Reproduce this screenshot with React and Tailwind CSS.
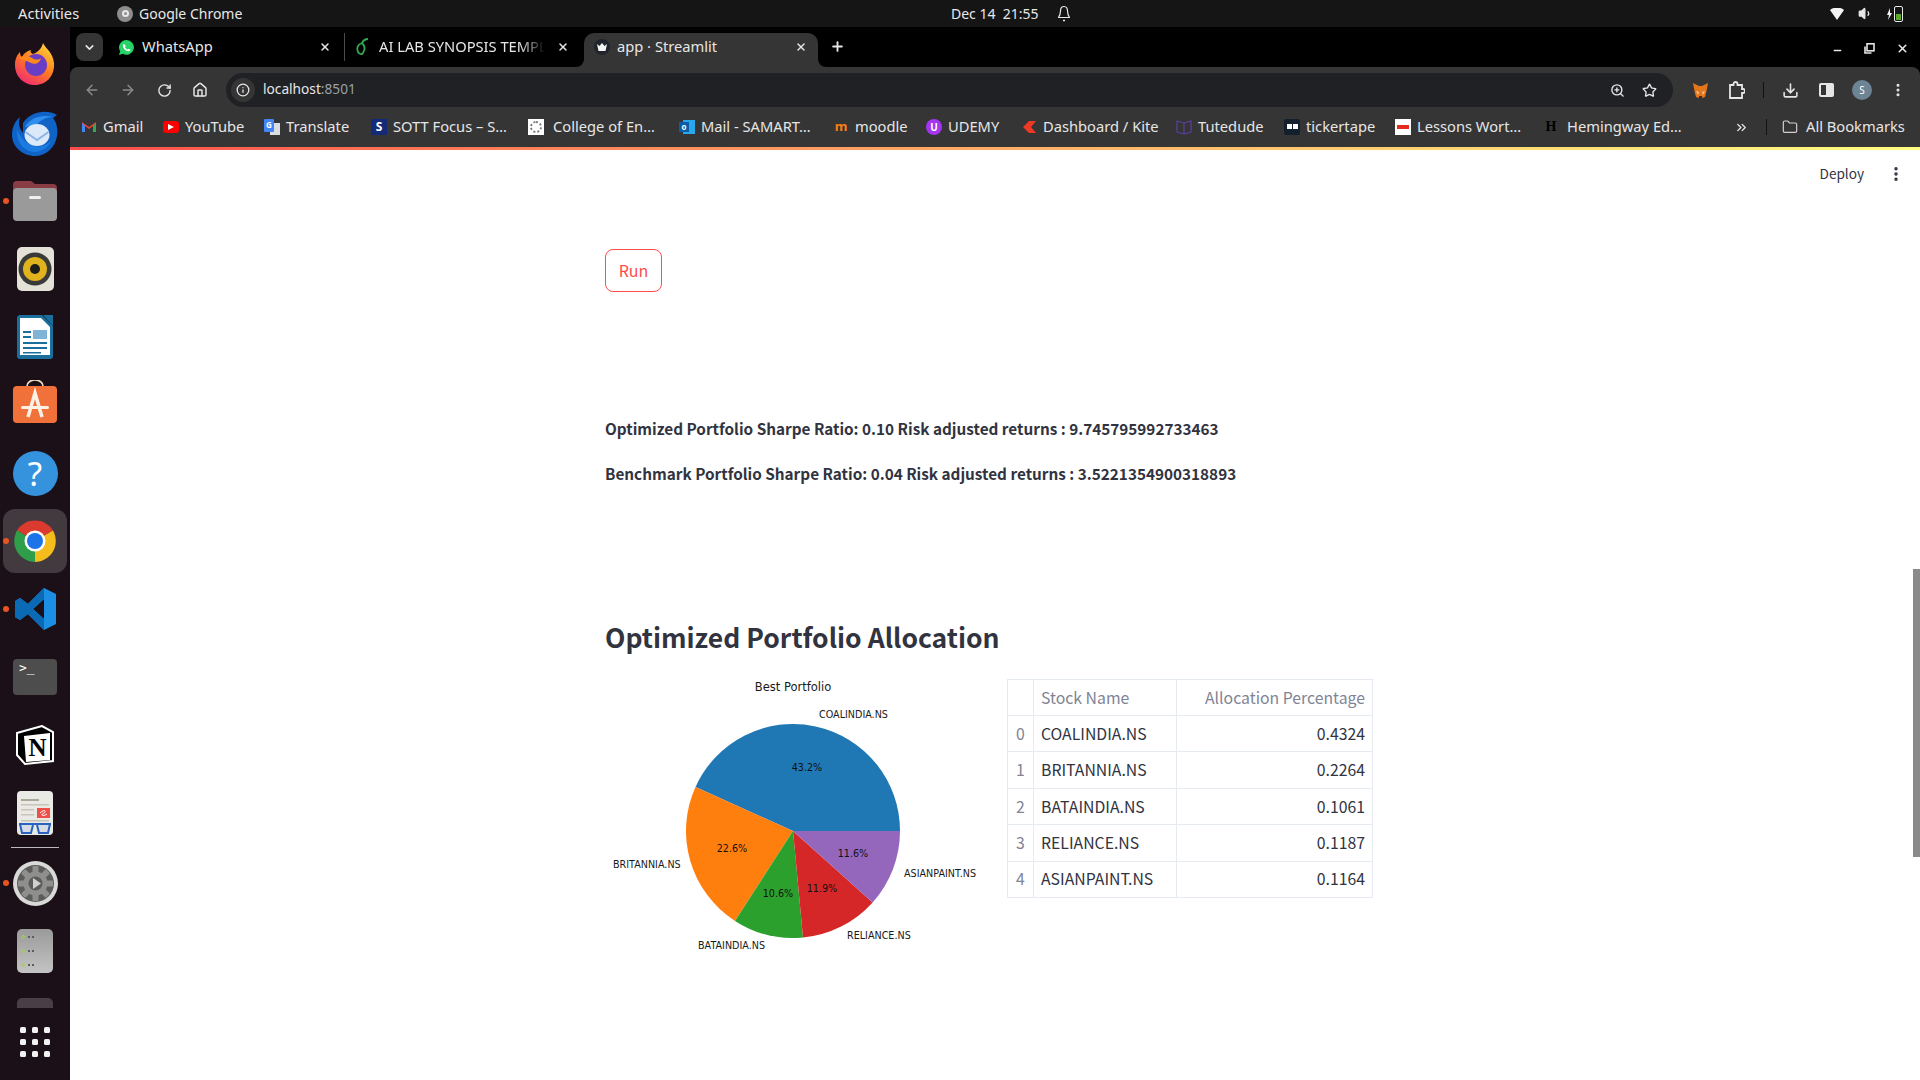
import {
  ArrowLeft,
  ArrowRight,
  RotateCw,
  Home,
  Info,
  ZoomIn,
  Star,
  Download,
  MoreVertical,
  ChevronDown,
  ChevronsRight,
  X,
  Plus,
  Minus,
  Folder,
  Volume1,
} from "lucide-react";

const UI_FONT = "font-['Noto_Sans',sans-serif]";
const ST_FONT = "font-['Noto_Sans_CJK_SC','Noto_Sans',sans-serif]";

// ---------- dock icons ----------
function FirefoxIcon() {
  return (
    <svg width="44" height="44" viewBox="0 0 44 44" className="-translate-y-[1px]">
      <defs>
        <linearGradient id="ffA" x1="0.8" y1="0" x2="0.2" y2="1">
          <stop offset="0" stopColor="#ffd53a" />
          <stop offset="0.5" stopColor="#ff7a1f" />
          <stop offset="1" stopColor="#f0257a" />
        </linearGradient>
      </defs>
      <path d="M30 1c2 5 10 9 11 20 1 13-8 22-19 22S2 35 2 23c0-6 2-10 5-13 0 3 1 4 2 5 2-4 5-6 9-7-1 2 0 3 2 4 5-2 9-6 10-11z" fill="url(#ffA)" />
      <circle cx="23" cy="23" r="11" fill="#6a3ec4" />
      <path d="M6 16c5-3 10-2 13 0 3 2 7 2 9 0-1 5-6 7-10 5-4-2-8-4-12-5z" fill="#ff8a1c" />
    </svg>
  );
}

function ThunderbirdIcon() {
  return (
    <svg width="48" height="48" viewBox="0 0 48 48">
      <path d="M12 14C20 2 36 0 46 6l-4 3c4 5 5 12 4 18-2 12-11 20-22 20C12 47 1 38 1 26 1 20 3 13 9 8c-2 6-1 11 3 16z" fill="#0f62c6" />
      <path d="M14 18c5-9 16-13 28-10-8 0-14 4-17 9z" fill="#2f8fee" />
      <path d="M6 20c-1 9 3 18 12 22 10 3 19-2 22-10-6 6-15 7-22 3-6-3-10-9-12-15z" fill="#1b7be0" />
      <ellipse cx="26" cy="26" rx="12.500" ry="11" fill="#dce9f8" />
      <path d="M14.500 23l11.500 8 11.500-8" fill="none" stroke="#8ab4e8" strokeWidth="2" />
    </svg>
  );
}

function FilesIcon() {
  return (
    <svg width="46" height="42" viewBox="0 0 46 42">
      <path d="M1 5a4 4 0 0 1 4-4h14l4 3h18a4 4 0 0 1 4 4v10H1z" fill="#8a3c44" />
      <rect x="1" y="8" width="44" height="33" rx="4" fill="#9a9a9a" />
      <rect x="17" y="16" width="12" height="3" rx="1.5" fill="#efefef" />
    </svg>
  );
}

function RhythmboxIcon() {
  return (
    <div className="w-[37px] h-[44px] rounded-[5px] bg-[#e4e1d6] flex items-center justify-center">
      <svg width="34" height="34" viewBox="0 0 34 34">
        <circle cx="17" cy="17" r="16.5" fill="#3a3a38" />
        <circle cx="17" cy="17" r="12" fill="#e0b21e" />
        <circle cx="17" cy="17" r="5" fill="#1c1c1a" />
      </svg>
    </div>
  );
}

function WriterIcon() {
  return (
    <svg width="38" height="46" viewBox="0 0 38 46">
      <path d="M3 1h23l11 11v30a3 3 0 0 1-3 3H4a3 3 0 0 1-3-3V3z" fill="#1b6f9c" />
      <path d="M4 4h21l9 9v28H4z" fill="#fff" />
      <path d="M27 1l10 11V1z" fill="#1b6f9c" />
      <rect x="7" y="17" width="8" height="2" fill="#1b6f9c" />
      <rect x="7" y="22" width="8" height="2" fill="#1b6f9c" />
      <rect x="17" y="16" width="14" height="9" fill="#7fb4d6" />
      <rect x="7" y="28" width="24" height="2" fill="#1b6f9c" />
      <rect x="7" y="33" width="24" height="2" fill="#1b6f9c" />
      <rect x="7" y="38" width="18" height="1.5" fill="#1b6f9c" />
    </svg>
  );
}

function StoreIcon() {
  return (
    <svg width="46" height="44" viewBox="0 0 46 44" className="-translate-y-[3px]">
      <path d="M15 10V6a8 6 0 0 1 16 0v4" fill="none" stroke="#f1d9bf" strokeWidth="1.6" />
      <rect x="1" y="6" width="44" height="37" rx="4" fill="#f0713a" />
      <path d="M16 37l7-24 7 24" fill="none" stroke="#fff1e6" strokeWidth="3.5" />
      <rect x="9" y="26" width="28" height="3" rx="1.5" fill="#fff1e6" />
    </svg>
  );
}

function HelpIcon() {
  return (
    <div className="w-[45px] h-[45px] rounded-full bg-[#3593dd] flex items-center justify-center text-white text-[33px] font-['Noto_Sans',sans-serif] leading-none">
      ?
    </div>
  );
}

function ChromeIcon({ size = 48 }) {
  return (
    <svg width={size} height={size} viewBox="0 0 48 48">
      <path d="M24 24L6 13.6A21 21 0 0 1 42 13.6z" fill="#db3a2e" />
      <path d="M24 24L42 13.6A21 21 0 0 1 24 45z" fill="#f4bd1c" />
      <path d="M24 24L24 45A21 21 0 0 1 6 13.6z" fill="#2e9e4a" />
      <circle cx="24" cy="24" r="10.5" fill="#fff" />
      <circle cx="24" cy="24" r="8" fill="#1d73e8" />
    </svg>
  );
}

function VscodeIcon() {
  return (
    <svg width="44" height="44" viewBox="0 0 44 44">
      <path d="M31 1L43 7v30l-12 6-16-16-8 6-5-3V14l5-3 8 6zM31 12L20 22l11 10z" fill="#1a8fe3" fillRule="evenodd" />
      <path d="M31 1L15 17 7 11 2 14v16l5 3 8-6 16 16V32L20 22 31 12z" fill="#0a6ab5" fillRule="evenodd" />
    </svg>
  );
}

function TerminalIcon() {
  return (
    <div className="w-[44px] h-[36px] rounded-[4px] bg-[#4d4d4d] pl-[6px] pt-[1px] text-white text-[13px] leading-[16px] font-['DejaVu_Sans_Mono',monospace]">
      &gt;_
    </div>
  );
}

function NotionIcon() {
  return (
    <div className="relative w-[38px] h-[40px] flex items-center justify-center">
      <svg className="absolute inset-0" width="38" height="40" viewBox="0 0 38 40">
        <path d="M1 8L26 1l11 6v29L9 39l-8-9z" fill="#000" stroke="#fff" strokeWidth="2" />
        <path d="M8 11L34 8v27L10 37z" fill="#fff" />
      </svg>
      <span className="relative ml-[5px] mt-[5px] text-black text-[25px] font-bold leading-none font-['Liberation_Serif',serif]">N</span>
    </div>
  );
}

function ReaderIcon() {
  return (
    <svg width="36" height="44" viewBox="0 0 36 44">
      <rect width="36" height="44" rx="4" fill="#e9e9e6" />
      <rect x="4" y="8" width="18" height="2" fill="#aca796" />
      <rect x="4" y="13" width="28" height="1.5" fill="#c8c4b8" />
      <rect x="4" y="18" width="13" height="1.5" fill="#c8c4b8" />
      <rect x="4" y="23" width="13" height="1.5" fill="#c8c4b8" />
      <rect x="20" y="17" width="13" height="10" fill="#ef4f48" />
      <path d="M23 22c3-3 6-3 5-1s-4 2-3 3 4 0 5-1" fill="none" stroke="#fff" strokeWidth="1" />
      <rect x="4" y="29" width="28" height="1.5" fill="#c8c4b8" />
      <path d="M2 33h32M3 33l2 9h9l2-8M20 34l2 8h9l2-9" fill="#d7dde6" stroke="#2a62c0" strokeWidth="2" />
    </svg>
  );
}

function SettingsIcon() {
  const teeth = [0, 45, 90, 135, 180, 225, 270, 315];
  return (
    <svg width="45" height="45" viewBox="0 0 45 45">
      <circle cx="22.5" cy="22.5" r="22.5" fill="#d9d9d7" />
      <circle cx="22.5" cy="22.5" r="18.5" fill="#5c5c5c" />
      {teeth.map((a) => (
        <rect key={a} x="19.5" y="5" width="6" height="8" rx="1" fill="#8f8f8d" transform={`rotate(${a} 22.5 22.5)`} />
      ))}
      <circle cx="22.5" cy="22.5" r="12" fill="#8f8f8d" />
      <circle cx="22.5" cy="22.5" r="7" fill="#5c5c5c" />
      <path d="M20 17l8 5.5-8 5.5z" fill="#d0d0ce" />
    </svg>
  );
}

function DrivesIcon() {
  return (
    <div className="w-[36px] h-[44px] rounded-[5px] bg-gradient-to-b from-[#9a9a9a] to-[#c4c4c4] flex flex-col justify-between px-[4px] py-[6px]">
      {[0, 1, 2].map((i) => (
        <div key={i} className="flex items-center gap-[2px]">
          <span className="w-[4px] h-[4px] rounded-full border border-[#a5cf5a]" />
          <span className="w-[2px] h-[2px] bg-[#5c5c5c] ml-[1px]" />
          <span className="w-[2px] h-[2px] bg-[#5c5c5c]" />
        </div>
      ))}
    </div>
  );
}

function DockSlot({ children, active, dot }) {
  return (
    <div className="relative h-[68px] flex items-center justify-center">
      {active && <div className="absolute left-[3px] right-[3px] top-[2px] bottom-[2px] rounded-[12px] bg-[#433a40]" />}
      {dot && <span className="absolute left-[3px] top-[31px] w-[6px] h-[6px] rounded-full bg-[#e95420]" />}
      <div className="relative">{children}</div>
    </div>
  );
}

function Dock() {
  return (
    <aside className="w-[70px] shrink-0 bg-[#1b1018] flex flex-col pt-[4px] relative">
      <DockSlot><FirefoxIcon /></DockSlot>
      <DockSlot><ThunderbirdIcon /></DockSlot>
      <DockSlot dot><FilesIcon /></DockSlot>
      <DockSlot><RhythmboxIcon /></DockSlot>
      <DockSlot><WriterIcon /></DockSlot>
      <DockSlot><StoreIcon /></DockSlot>
      <DockSlot><HelpIcon /></DockSlot>
      <DockSlot active dot><ChromeIcon /></DockSlot>
      <DockSlot dot><VscodeIcon /></DockSlot>
      <DockSlot><TerminalIcon /></DockSlot>
      <DockSlot><NotionIcon /></DockSlot>
      <DockSlot><ReaderIcon /></DockSlot>
      <div className="h-px bg-[#bdb9bb] mx-[11px] mb-[1px]" />
      <DockSlot dot><SettingsIcon /></DockSlot>
      <DockSlot><DrivesIcon /></DockSlot>
      <div className="h-[10px] mt-[13px] mx-[17px] rounded-t-[5px] bg-[#4a3e46]" />
      <div className="grid grid-cols-3 gap-[6px] w-[30px] mx-auto mt-[19px]">
        {[0, 1, 2, 3, 4, 5, 6, 7, 8].map((i) => (
          <span key={i} className="w-[6px] h-[6px] rounded-[1.5px] bg-[#f2f2f2]" />
        ))}
      </div>
    </aside>
  );
}

// ---------- top bar ----------
function BellOutline() {
  return (
    <svg width="12" height="17" viewBox="0 0 12 17" fill="none" stroke="#e8e8e8" strokeWidth="1.2">
      <path d="M6 1.500c-2.500 0-3.500 2-3.500 4.500 0 3-1 5-2 6.500h11c-1-1.500-2-3.500-2-6.500 0-2.500-1-4.500-3.500-4.500z" />
      <path d="M5 15.500h2" strokeWidth="1.6" />
    </svg>
  );
}

function TopBar() {
  return (
    <header className={`h-[27px] shrink-0 bg-[#151515] text-[#e8e8e8] text-[14px] flex items-center ${UI_FONT}`}>
      <span className="ml-[18px] w-[99px] text-[14.7px]">Activities</span>
      <span className="w-[16px] h-[16px] rounded-full bg-[#8d8d8d] flex items-center justify-center">
        <span className="w-[7px] h-[7px] rounded-full border-2 border-[#e8e8e8]" />
      </span>
      <span className="ml-[6px] w-[812px]">Google Chrome</span>
      <span className="w-[107px]">Dec 14&nbsp;&nbsp;21:55</span>
      <BellOutline />
      <div className="ml-auto flex items-center mr-[17px] gap-[14px]">
        <svg width="14" height="12" viewBox="0 0 14 12"><path d="M0 2a11 11 0 0 1 14 0L7 12z" fill="#f4f4f4" /></svg>
        <Volume1 size={15} fill="#e8e8e8" />
        <div className="flex items-center gap-[2px]">
          <svg width="5" height="12" viewBox="0 0 5 12"><path d="M3 0L0 7h2l-1 5 4-7H3z" fill="#f4f4f4" /></svg>
          <div className="w-[9px] h-[16px] rounded-[2px] border border-[#e8e8e8] flex items-end p-[1px]">
            <div className="w-full h-[6px] bg-[#5fa82c]" />
          </div>
        </div>
      </div>
    </header>
  );
}

// ---------- tabs ----------
function WhatsAppIcon() {
  return (
    <svg width="17" height="17" viewBox="0 0 17 17">
      <path d="M8.5 1a7.4 7.4 0 0 0-6.3 11.3L1 16l3.8-1.2A7.4 7.4 0 1 0 8.5 1z" fill="#25d366" />
      <path d="M6 4.8c-.5 0-1.2.7-1.2 1.9 0 2.500 3 5.600 5.700 5.600 1.300 0 2-.9 2-1.500l-2-1.100-.9.9c-1-.3-2.200-1.500-2.600-2.600l.8-.9z" fill="#fff" />
    </svg>
  );
}

function Tabs() {
  return (
    <div className={`h-[40px] bg-black text-[14.7px] text-[#e6e6e6] flex items-start pl-[6px] pt-[6px] ${UI_FONT}`}>
      <button className="w-[27px] h-[28px] rounded-lg bg-[#353535] flex items-center justify-center">
        <ChevronDown size={13} strokeWidth={3} />
      </button>
      <div className="w-[236px] ml-[6px] h-[28px] flex items-center pl-[9px] pr-[13px] border-r border-[#4b4b4b]">
        <WhatsAppIcon />
        <span className="ml-[7px] flex-1 mb-[2px]">WhatsApp</span>
        <X size={12} strokeWidth={3} />
      </div>
      <div className="w-[239px] h-[28px] flex items-center pl-[9px] pr-[15px]">
        <svg width="16" height="18" viewBox="0 0 16 18">
          <path d="M8 5c-4 1-6 5-4 9 1 2 4 3 5 1 2-3 2-7-1-10zM8 5c1-2 3-4 6-4" fill="none" stroke="#33a852" strokeWidth="1.8" />
        </svg>
        <span className="ml-[9px] flex-1 overflow-hidden whitespace-nowrap mr-[12px] mb-[2px] [mask-image:linear-gradient(to_right,black_85%,transparent)]">AI LAB SYNOPSIS TEMPL</span>
        <X size={12} strokeWidth={3} />
      </div>
      <div className="relative w-[234px] h-[34px] bg-[#353535] rounded-t-[10px] flex items-center pl-[10px] pr-[11px] pb-[6px]">
        <svg className="absolute left-[-8px] bottom-0" width="8" height="8" viewBox="0 0 8 8"><path d="M8 0v8H0a8 8 0 0 0 8-8z" fill="#353535" /></svg>
        <svg className="absolute right-[-8px] bottom-0" width="8" height="8" viewBox="0 0 8 8"><path d="M0 0v8h8a8 8 0 0 1-8-8z" fill="#353535" /></svg>
        <span className="w-[16px] h-[16px] rounded-full bg-[#20242c] flex items-center justify-center">
          <svg width="10" height="8" viewBox="0 0 10 8"><path d="M0 1l2.500 2L5 0l2.500 3L10 1 8.500 8h-7z" fill="#f4f4f4" /></svg>
        </span>
        <span className="ml-[7px] flex-1 mb-[2px]">app · Streamlit</span>
        <X size={12} strokeWidth={3} />
      </div>
      <Plus size={15} strokeWidth={3} className="ml-[12px] mt-[6px]" />
      <div className="ml-auto mr-[11px] flex items-center gap-[21px] mt-[7px]">
        <Minus size={11} strokeWidth={3} className="mt-[5px]" />
        <svg width="11" height="11" viewBox="0 0 11 11"><rect x="3" y="0.8" width="7" height="7" fill="none" stroke="#e6e6e6" strokeWidth="1.6" /><path d="M1 3.500v6.500h6.500" fill="none" stroke="#e6e6e6" strokeWidth="1.6" /></svg>
        <X size={13} strokeWidth={3} />
      </div>
    </div>
  );
}

// ---------- toolbar ----------
function ToolBtn({ children }) {
  return <button className="w-[36px] h-[34px] flex items-center justify-center shrink-0">{children}</button>;
}

function Toolbar() {
  return (
    <div className={`h-[40px] bg-[#353535] rounded-t-lg flex items-start pt-[6px] pl-[4px] ${UI_FONT}`}>
      <ToolBtn><ArrowLeft size={16} strokeWidth={2.2} className="text-[#8b8b8b]" /></ToolBtn>
      <ToolBtn><ArrowRight size={16} strokeWidth={2.2} className="text-[#8b8b8b]" /></ToolBtn>
      <ToolBtn><RotateCw size={15} strokeWidth={2.2} className="text-[#e6e6e6]" /></ToolBtn>
      <ToolBtn><Home size={16} strokeWidth={2.2} className="text-[#e6e6e6]" /></ToolBtn>
      <div className="ml-[8px] w-[1447px] h-[34px] rounded-full bg-[#202124] flex items-center text-[13.7px] pl-[5px]">
        <span className="w-[24px] h-[24px] rounded-full bg-[#353535] flex items-center justify-center">
          <Info size={14} strokeWidth={2.2} className="text-[#e6e6e6]" />
        </span>
        <span className="ml-[8px] mb-[1px] text-[#e6e6e6]">localhost<span className="text-[#9aa0a6]">:8501</span></span>
        <div className="ml-auto flex items-center gap-[17px] mr-[16px] text-[#e6e6e6]">
          <ZoomIn size={15} strokeWidth={2.2} />
          <Star size={15} strokeWidth={2.2} />
        </div>
      </div>
      <div className="ml-[9px] flex items-start text-[#e6e6e6]">
        <ToolBtn>
          <svg width="17" height="17" viewBox="0 0 17 17">
            <path d="M1 1l6 3h3l6-3-1.500 8L13 15l-3 1H7l-3-1-1.500-6z" fill="#e2761b" />
            <path d="M4 9l3 1-1 3zM13 9l-3 1 1 3z" fill="#f6c79c" />
            <path d="M7 14h3v2H7z" fill="#3a2a1c" />
          </svg>
        </ToolBtn>
        <ToolBtn>
          <svg width="17" height="18" viewBox="0 0 17 18" fill="none" stroke="#e6e6e6" strokeWidth="1.8">
            <path d="M2 4h3.500V3a2 2 0 0 1 4 0v1H14v4h1a2 2 0 0 1 0 4h-1v5H2z" />
          </svg>
        </ToolBtn>
        <div className="w-[18px] h-[34px] flex items-center justify-center">
          <span className="w-px h-[16px] bg-[#111]" />
        </div>
        <ToolBtn><Download size={17} strokeWidth={2.2} /></ToolBtn>
        <ToolBtn>
          <span className="w-[15px] h-[14px] rounded-[2px] border-2 border-[#e6e6e6] flex justify-end">
            <span className="w-[6px] h-full bg-[#e6e6e6]" />
          </span>
        </ToolBtn>
        <ToolBtn>
          <span className="w-[20px] h-[20px] rounded-full bg-[#6d8494] text-[10px] text-white flex items-center justify-center">S</span>
        </ToolBtn>
        <ToolBtn><MoreVertical size={16} strokeWidth={2.6} /></ToolBtn>
      </div>
    </div>
  );
}

// ---------- bookmarks ----------
const tile = "w-[16px] h-[16px] flex items-center justify-center text-[10px] font-bold leading-none shrink-0";
const bookmarks = [
  {
    label: "Gmail", w: "w-[82px]",
    icon: (
      <svg width="16" height="13" viewBox="0 0 16 13">
        <path d="M1 12V2l7 5 7-5v10h-3V6L8 9 4 6v6z" fill="#ea4335" />
        <path d="M1 12V3l3 3v6z" fill="#4285f4" />
        <path d="M15 12V3l-3 3v6z" fill="#34a853" />
      </svg>
    ),
  },
  {
    label: "YouTube", w: "w-[101px]",
    icon: (
      <span className="w-[16px] h-[12px] rounded-[3px] bg-[#f00] flex items-center justify-center">
        <svg width="6" height="6" viewBox="0 0 6 6"><path d="M0 0l6 3-6 3z" fill="#fff" /></svg>
      </span>
    ),
  },
  {
    label: "Translate", w: "w-[107px]",
    icon: (
      <span className="relative w-[16px] h-[16px]">
        <span className="absolute right-0 bottom-0 w-[10px] h-[12px] bg-[#dadce0]" />
        <span className="absolute left-0 top-0 w-[10px] h-[13px] rounded-[1px] bg-[#4285f4] text-white text-[8px] font-bold flex items-center justify-center">G</span>
      </span>
    ),
  },
  {
    label: "SOTT Focus – S…", w: "w-[157px]",
    icon: <span className={`${tile} bg-[#142a78] text-white text-[12px]`}>S</span>,
  },
  {
    label: "College of En…", w: "w-[151px]", gap: "ml-[9px]",
    icon: (
      <span className="w-[16px] h-[16px] bg-white flex items-center justify-center">
        <span className="w-[12px] h-[12px] rounded-full border-2 border-dotted border-[#777]" />
      </span>
    ),
  },
  {
    label: "Mail - SAMART…", w: "w-[154px]",
    icon: (
      <span className="relative w-[16px] h-[16px]">
        <span className="absolute right-0 top-[1px] w-[12px] h-[14px] bg-[#28a8ea]" />
        <span className="absolute left-0 top-[3px] w-[10px] h-[10px] bg-[#0a5ca8] text-white text-[8px] font-bold flex items-center justify-center">o</span>
      </span>
    ),
  },
  {
    label: "moodle", w: "w-[93px]",
    icon: <span className={`${tile} text-[#f98012] text-[13px]`}>m</span>,
  },
  {
    label: "UDEMY", w: "w-[95px]",
    icon: <span className={`${tile} rounded-full bg-[#a435f0] text-white`}>U</span>,
  },
  {
    label: "Dashboard / Kite", w: "w-[155px]",
    icon: (
      <svg width="14" height="12" viewBox="0 0 14 12"><path d="M7 0h7L9 6l5 6H7L1 6z" fill="#ee3a24" /></svg>
    ),
  },
  {
    label: "Tutedude", w: "w-[108px]",
    icon: (
      <svg width="16" height="16" viewBox="0 0 16 16"><path d="M1 2l7 2 7-2v11l-7 2-7-2zM8 4v11" fill="none" stroke="#5b3fa0" strokeWidth="1.2" /></svg>
    ),
  },
  {
    label: "tickertape", w: "w-[111px]",
    icon: (
      <span className="w-[16px] h-[16px] rounded-[2px] bg-[#14202e] flex items-center justify-center gap-px">
        <span className="w-[5px] h-[5px] bg-white" />
        <span className="w-[5px] h-[5px] bg-white" />
      </span>
    ),
  },
  {
    label: "Lessons Wort…", w: "w-[148px]",
    icon: (
      <span className="w-[16px] h-[16px] bg-white flex items-center justify-center">
        <span className="w-[12px] h-[4px] bg-[#e62b1e]" />
      </span>
    ),
  },
  {
    label: "Hemingway Ed…", w: "w-[191px]", gap: "ml-[8px]",
    icon: <span className={`${tile} text-black font-['Liberation_Serif',serif] text-[14px]`}>H</span>,
  },
];

function Bookmarks() {
  return (
    <div className={`h-[40px] bg-[#353535] flex items-center pl-[11px] text-[14.7px] text-[#e6e6e6] ${UI_FONT}`}>
      {bookmarks.map((b) => (
        <div key={b.label} className={`${b.w} flex items-center shrink-0`}>
          <span className="w-[16px] h-[16px] flex items-center justify-center shrink-0">{b.icon}</span>
          <span className={`${b.gap || "ml-[6px]"} mb-[2px] whitespace-nowrap`}>{b.label}</span>
        </div>
      ))}
      <ChevronsRight size={15} strokeWidth={2.2} />
      <span className="ml-[17px] w-px h-[16px] bg-[#111]" />
      <Folder size={16} strokeWidth={1.8} className="ml-[15px] text-[#cfcfcf]" />
      <span className="ml-[8px] mb-[2px] whitespace-nowrap">All Bookmarks</span>
    </div>
  );
}

// ---------- pie chart ----------
const slices = [
  { pct: 43.24, color: "#1f77b4" },
  { pct: 22.64, color: "#ff7f0e" },
  { pct: 10.61, color: "#2ca02c" },
  { pct: 11.87, color: "#d62728" },
  { pct: 11.64, color: "#9467bd" },
];

const pieLabels = [
  { text: "COALINDIA.NS", x: 819, y: 714 },
  { text: "BRITANNIA.NS", x: 613, y: 864 },
  { text: "BATAINDIA.NS", x: 698, y: 945 },
  { text: "RELIANCE.NS", x: 847, y: 935 },
  { text: "ASIANPAINT.NS", x: 904, y: 873 },
];

const pieValues = [
  { text: "43.2%", x: 807, y: 767 },
  { text: "22.6%", x: 732, y: 848 },
  { text: "10.6%", x: 778, y: 893 },
  { text: "11.9%", x: 822, y: 888 },
  { text: "11.6%", x: 853, y: 853 },
];

function PieChart() {
  const cx = 793;
  const cy = 831;
  const r = 107;
  let start = 0;
  const paths = slices.map((s) => {
    const end = start + (s.pct / 100) * Math.PI * 2;
    const x1 = cx + r * Math.cos(start);
    const y1 = cy - r * Math.sin(start);
    const x2 = cx + r * Math.cos(end);
    const y2 = cy - r * Math.sin(end);
    const large = end - start > Math.PI ? 1 : 0;
    start = end;
    return { d: `M${cx} ${cy}L${x1} ${y1}A${r} ${r} 0 ${large} 0 ${x2} ${y2}Z`, color: s.color };
  });

  return (
    <svg width="392" height="290" viewBox="605 670 392 290" className="shrink-0" fontFamily="'DejaVu Sans',sans-serif" fill="#1a1a1a">
      {paths.map((p) => (
        <path key={p.color} d={p.d} fill={p.color} />
      ))}
      <text x="793" y="687" textAnchor="middle" dominantBaseline="central" fontSize="11.5">Best Portfolio</text>
      {pieLabels.map((l) => (
        <text key={l.text} x={l.x} y={l.y} dominantBaseline="central" fontSize="9.6">{l.text}</text>
      ))}
      {pieValues.map((v) => (
        <text key={v.text} x={v.x} y={v.y} textAnchor="middle" dominantBaseline="central" fontSize="9.6" fill="#111">{v.text}</text>
      ))}
    </svg>
  );
}

// ---------- table ----------
const rows = [
  { name: "COALINDIA.NS", value: "0.4324" },
  { name: "BRITANNIA.NS", value: "0.2264" },
  { name: "BATAINDIA.NS", value: "0.1061" },
  { name: "RELIANCE.NS", value: "0.1187" },
  { name: "ASIANPAINT.NS", value: "0.1164" },
];

function AllocationTable() {
  return (
    <table className="ml-[10px] mt-[9px] w-[366px] table-fixed border-collapse text-[15.8px] self-start">
      <thead>
        <tr className="h-[36px] text-[#808495] font-normal">
          <th className="w-[26px] border border-[#e6eaf1]" />
          <th className="w-[143px] border border-[#e6eaf1] px-[7px] text-left font-normal">Stock Name</th>
          <th className="border border-[#e6eaf1] px-[7px] text-right font-normal">Allocation Percentage</th>
        </tr>
      </thead>
      <tbody>
        {rows.map((row, i) => (
          <tr key={row.name} className="h-[36.4px] text-[#31333f]">
            <td className="border border-[#e6eaf1] text-center text-[#808495]">{i}</td>
            <td className="border border-[#e6eaf1] px-[7px]">{row.name}</td>
            <td className="border border-[#e6eaf1] px-[7px] text-right">{row.value}</td>
          </tr>
        ))}
      </tbody>
    </table>
  );
}

// ---------- streamlit page ----------
function StreamlitPage() {
  return (
    <main className={`relative flex-1 bg-white text-[#31333f] overflow-hidden ${ST_FONT}`}>
      <div className="h-[48px] flex items-center justify-end">
        <span className="text-[13.6px] mr-[23px] mb-[2px]">Deploy</span>
        <MoreVertical size={18} strokeWidth={2.6} className="mr-[15px]" />
      </div>
      <div className="pl-[535px]">
        <button className="mt-[51px] w-[57px] h-[43px] rounded-[8px] border border-[#ff4b4b] text-[#ff4b4b] text-[16px] pb-[2px]">Run</button>
        <p className="mt-[122px] text-[15.3px] leading-[28px] font-semibold">
          Optimized Portfolio Sharpe Ratio: 0.10 Risk adjusted returns : 9.745795992733463
        </p>
        <p className="mt-[17px] text-[15.3px] leading-[28px] font-semibold">
          Benchmark Portfolio Sharpe Ratio: 0.04 Risk adjusted returns : 3.5221354900318893
        </p>
        <h2 className="mt-[128px] text-[26.5px] leading-[44px] font-semibold">Optimized Portfolio Allocation</h2>
        <div className="mt-[11px] flex">
          <PieChart />
          <AllocationTable />
        </div>
      </div>
      <div className="absolute right-0 top-[419px] w-[7px] h-[288px] bg-[#8a8a8a]" />
    </main>
  );
}

export default function App() {
  return (
    <div className="w-[1920px] h-[1080px] overflow-hidden flex flex-col bg-black">
      <TopBar />
      <div className="flex-1 flex min-h-0">
        <Dock />
        <div className="flex-1 flex flex-col min-w-0">
          <Tabs />
          <Toolbar />
          <Bookmarks />
          <div className="h-[3px] shrink-0 bg-gradient-to-r from-[#ff4b4b] to-[#fffd80]" />
          <StreamlitPage />
        </div>
      </div>
    </div>
  );
}
